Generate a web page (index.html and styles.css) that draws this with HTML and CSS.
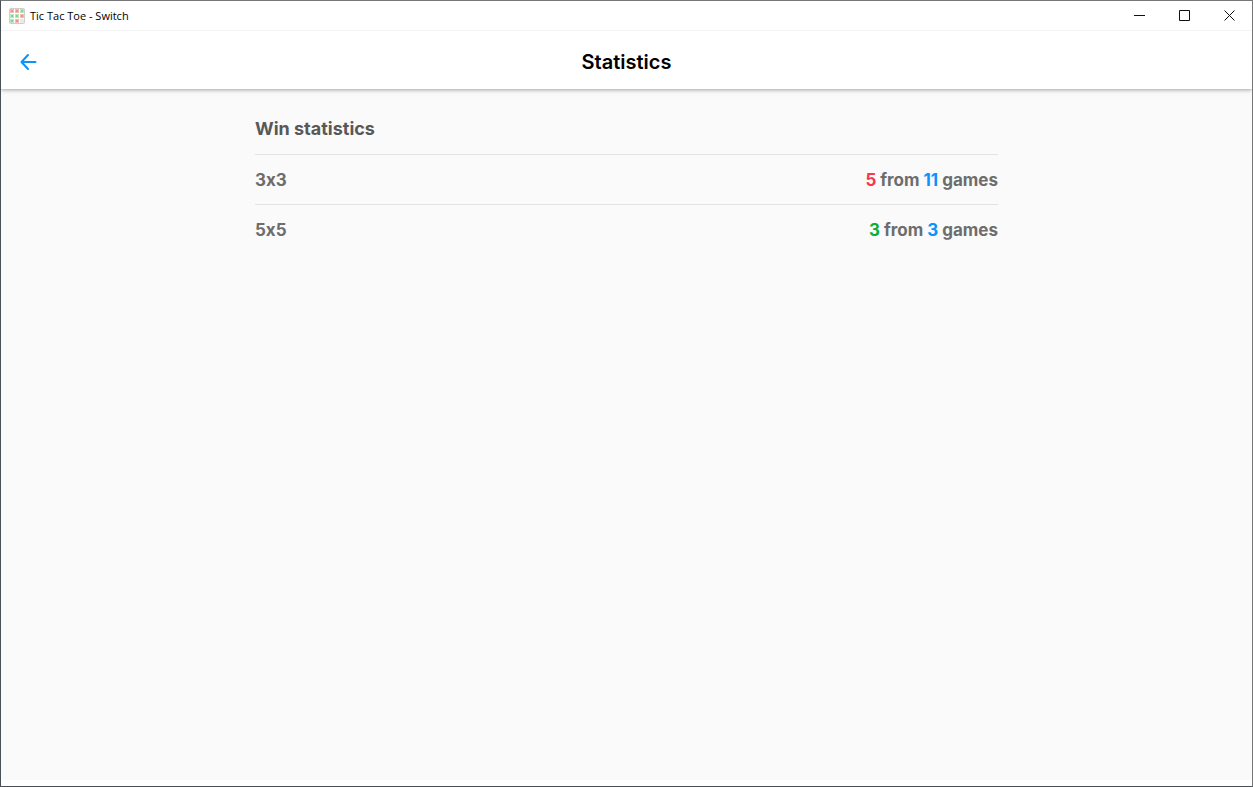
FILE: index.html
```html
<!DOCTYPE html>
<html lang="en">

<head>
    <meta charset="UTF-8">
    <meta name="viewport" content="width=device-width, initial-scale=1.0">
    <title>Tic Tac Toe - Switch</title>
    <link rel="stylesheet" href="styles.css">
</head>

<body>
    <div class="title-bar">
        <svg class="app-icon" viewBox="0 0 16 16" aria-hidden="true">
            <rect width="16" height="16" rx="2" fill="#d0cdca" />
            <path fill="#f6b9b5" d="M1 1h4v4H1zM6 1h4v4H6zM11 6h4v4h-4zM6 11h4v4H6z" />
            <path fill="#b5e9bd" d="M11 1h4v4h-4zM1 6h4v4H1zM6 6h4v4H6zM1 11h4v4H1z" />
            <path fill="#e9e9e9" d="M11 11h4v4h-4z" />
            <path fill="#fff" d="M5 1h1v14H5zM10 1h1v14h-1zM1 5h14v1H1zM1 10h14v1H1z" />
            <path fill="#ee918d" d="M2 2h2v2H2zM7 2h2v2H7zM12 7h2v2h-2zM7 12h2v2H7z" />
            <path fill="#83d593" d="M12 2h2v2h-2zM2 7h2v2H2zM7 7h2v2H7zM2 12h2v2H2z" />
        </svg>
        <span class="app-name">Tic Tac Toe - Switch</span>
        <div class="window-buttons">
            <button type="button" aria-label="Minimize">
                <svg viewBox="0 0 11 11"><path d="M0 5.5h11" /></svg>
            </button>
            <button type="button" aria-label="Maximize">
                <svg viewBox="0 0 11 11"><path d="M.5.5h10v10H.5z" /></svg>
            </button>
            <button type="button" aria-label="Close">
                <svg viewBox="0 0 11 11"><path d="M.5.5l10 10M10.5.5l-10 10" /></svg>
            </button>
        </div>
    </div>

    <header>
        <a href="#" class="back" aria-label="Back">
            <svg viewBox="0 0 18 18"><path d="M16.500 9H2.500M9 2L2.500 9L9 16" /></svg>
        </a>
        <h1>Statistics</h1>
    </header>

    <main>
        <section class="stats">
            <h2>Win statistics</h2>
            <table>
                <tr>
                    <th scope="row">3x3</th>
                    <td><span class="lost">5</span> from <span class="total">11</span> games</td>
                </tr>
                <tr>
                    <th scope="row">5x5</th>
                    <td><span class="won">3</span> from <span class="total">3</span> games</td>
                </tr>
            </table>
        </section>
    </main>
</body>

</html>
```
FILE: styles.css
```css
:root {
    --primary-color: #0a93fb;
    --won-color: #0bae38;
    --lost-color: #fb3648;
    --text-color: #6d6d6d;
    --line-color: #e3e3e3;
    --page-background: #fafafa;
}

* {
    margin: 0;
    padding: 0;
    box-sizing: border-box;
}

body {
    display: flex;
    flex-direction: column;
    min-height: 100vh;
    border: 1px solid #4a5058;
    border-top-color: #777;
    border-right-color: #777;
    background-color: #fff;
    font-family: Inter, sans-serif;
    color: var(--text-color);
}

/* Window title */
.title-bar {
    display: flex;
    align-items: center;
    height: 29px;
    padding-left: 8px;
    background-color: #fff;
    z-index: 2;
}

.app-icon {
    width: 16px;
    height: 16px;
}

.app-name {
    margin-left: 5px;
    font-family: "Open Sans", sans-serif;
    font-size: 11px;
    color: #000;
}

.window-buttons {
    display: flex;
    height: 100%;
    margin-left: auto;
}

.window-buttons button {
    display: flex;
    align-items: center;
    justify-content: center;
    width: 45px;
    border: none;
    background: none;
}

.window-buttons svg {
    width: 11px;
    height: 11px;
    fill: none;
    stroke: #111;
}

/* App header */
header {
    display: grid;
    grid-template-columns: 1fr auto 1fr;
    align-items: center;
    height: 59px;
    padding: 3px 18px 0;
    border-top: 1px solid #f5f5f5;
    background-color: #fff;
    box-shadow: 0 1px 4px rgba(0, 0, 0, 0.35);
    z-index: 1;
}

.back {
    display: flex;
    width: 18px;
}

.back svg {
    width: 18px;
    height: 18px;
    fill: none;
    stroke: var(--primary-color);
    stroke-width: 2;
    stroke-linecap: round;
    stroke-linejoin: round;
}

h1 {
    font-size: 20px;
    font-weight: 600;
    line-height: 24px;
    color: #000;
}

/* Statistics */
main {
    flex: 1;
    margin-bottom: 6px;
    padding: 15px 16px;
    background-color: var(--page-background);
}

.stats {
    max-width: 743px;
    margin: 0 auto;
}

h2 {
    font-size: 18px;
    font-weight: 700;
    line-height: 50px;
    color: #585858;
}

table {
    width: 100%;
    border-collapse: collapse;
    font-size: 17px;
    font-weight: 700;
    /* keep a plain x between the digits */
    font-feature-settings: "calt" 0;
}

tr {
    height: 50px;
    border-top: 1px solid var(--line-color);
}

th {
    text-align: left;
}

td {
    text-align: right;
}

.won {
    color: var(--won-color);
}

.lost {
    color: var(--lost-color);
}

.total {
    color: var(--primary-color);
}
```
